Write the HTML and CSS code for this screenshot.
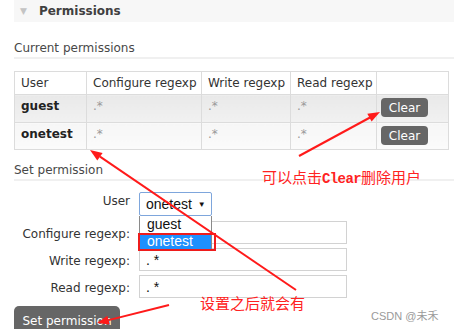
FILE: index.html
```html
<!DOCTYPE html>
<html lang="en">
<head>
    <meta charset="UTF-8">
    <meta name="viewport" content="width=device-width, initial-scale=1.0">
    <title>Permissions</title>
    <link rel="stylesheet" href="styles.css">
</head>
<body>
    <div class="page">
        <div class="section-head"><span class="tri">&#9660;</span>Permissions</div>

        <div class="section-body">
            <h3>Current permissions</h3>
            <table class="perms">
                <colgroup>
                    <col class="c-user">
                    <col class="c-conf">
                    <col class="c-write">
                    <col class="c-read">
                    <col class="c-act">
                </colgroup>
                <tr class="head-row">
                    <th>User</th>
                    <th>Configure regexp</th>
                    <th>Write regexp</th>
                    <th>Read regexp</th>
                    <th></th>
                </tr>
                <tr class="alt1">
                    <td class="name">guest</td>
                    <td class="rx">.*</td>
                    <td class="rx">.*</td>
                    <td class="rx">.*</td>
                    <td><button class="btn-clear">Clear</button></td>
                </tr>
                <tr class="alt2">
                    <td class="name">onetest</td>
                    <td class="rx">.*</td>
                    <td class="rx">.*</td>
                    <td class="rx">.*</td>
                    <td><button class="btn-clear">Clear</button></td>
                </tr>
            </table>

            <h3 class="set-title">Set permission</h3>
            <form class="set-form">
                <div class="row">
                    <label>User</label>
                    <div class="select">onetest <span class="caret">&#9660;</span></div>
                </div>
                <div class="row">
                    <label>Configure regexp:</label>
                    <input type="text" value="">
                </div>
                <div class="row">
                    <label>Write regexp:</label>
                    <input type="text" value=". *">
                </div>
                <div class="row">
                    <label>Read regexp:</label>
                    <input type="text" value=". *">
                </div>
            </form>
            <button class="btn-set">Set permission</button>
        </div>

        <!-- open select list -->
        <div class="dropdown">
            <div class="opt">guest</div>
            <div class="opt active">onetest</div>
        </div>
        <div class="mark-box"></div>

        <!-- annotations -->
        <svg class="arrows" width="454" height="329" viewBox="0 0 454 329">
            <g stroke="#ff1a1a" stroke-width="2" fill="none">
                <line x1="299" y1="156" x2="370" y2="117.5"/>
                <line x1="296" y1="290" x2="100" y2="156.7"/>
                <line x1="169" y1="305" x2="108.6" y2="320.1"/>
            </g>
            <g fill="#ff1a1a">
                <polygon points="380,112 371.6,121.6 367.3,113.8"/>
                <polygon points="90,150 102.6,153 97.3,160.4"/>
                <polygon points="97,323 109.8,324.5 107.4,315.7"/>
            </g>
        </svg>
        <div class="note note-clear">可以点击<span class="mono">Clear</span>删除用户</div>
        <div class="note note-set">设置之后就会有</div>
        <div class="watermark">CSDN @未禾</div>
    </div>
</body>
</html>
```

FILE: styles.css
```css
body {
    margin: 0;
    font-family: Verdana, "DejaVu Sans", sans-serif;
    font-size: 12px;
    color: #444;
    background: #fff;
}
.page {
    position: relative;
    width: 454px;
    height: 329px;
    overflow: hidden;
}
.section-head {
    margin-left: 14px;
    height: 22px;
    line-height: 22px;
    background: #f7f7f7;
    font-weight: bold;
    font-size: 12px;
    color: #404040;
}
.tri {
    display: inline-block;
    font-size: 9px;
    color: #c4c4c4;
    margin: 0 12px 0 6px;
    vertical-align: top;
}
.section-body {
    padding-left: 14px;
}
h3 {
    margin: 18px 0 0;
    font-size: 12px;
    font-weight: normal;
    line-height: 16px;
    padding-bottom: 1px;
    border-bottom: 2px solid #f0f0f0;
    color: #484848;
}
.perms {
    margin-top: 12px;
    border-collapse: collapse;
    table-layout: fixed;
    width: 434px;
    border: 1px solid #d6d6d6;
}
.c-user { width: 72px; }
.c-conf { width: 115px; }
.c-write { width: 89px; }
.c-read { width: 86px; }
.c-act { width: 72px; }
.perms th,
.perms td {
    border: 1px solid #dcdcdc;
    text-align: left;
    vertical-align: top;
    padding: 3px 6px;
    line-height: 16px;
    white-space: nowrap;
}
.head-row th {
    font-weight: normal;
    height: 16px;
    padding-top: 3px;
    color: #333;
}
.alt1 td {
    height: 21px;
    background: linear-gradient(#e9e9e9, #f1f1f1);
}
.alt2 td {
    height: 20px;
    background: linear-gradient(#f6f6f6, #fbfbfb);
}
.name {
    font-weight: bold;
    color: #222;
    padding-top: 2px;
}
.rx {
    color: #999;
}
.perms td:last-child {
    padding: 2px 4px;
}
.btn-clear {
    background: #666;
    color: #fff;
    border: none;
    border-radius: 4px;
    font-family: Verdana, "DejaVu Sans", sans-serif;
    font-size: 12px;
    width: 47px;
    height: 19px;
    padding: 0;
    margin-top: 1px;
}
.set-title {
    margin-top: 12px;
}
.set-form {
    margin-top: 11px;
}
.row {
    display: flex;
    align-items: center;
    height: 27px;
}
.row:first-child {
    height: 27px;
    align-items: flex-start;
}
.row label {
    width: 116px;
    text-align: right;
    margin-right: 9px;
    padding-top: 3px;
    color: #333;
}
.row:first-child label {
    padding-top: 2px;
}
.select {
    box-sizing: border-box;
    width: 73px;
    height: 24px;
    border: 1px solid #7ea6dc;
    border-radius: 2px;
    padding-left: 6px;
    font-family: "Liberation Sans", Arial, sans-serif;
    font-size: 14px;
    line-height: 22px;
    color: #111;
    background: #fff;
}
.caret {
    font-size: 8px;
    vertical-align: 2px;
    margin-left: 2px;
}
.row input {
    box-sizing: border-box;
    width: 208px;
    height: 23px;
    border: 1px solid #d2d2d2;
    padding: 0 6px;
    font-family: "Liberation Sans", Arial, sans-serif;
    font-size: 14px;
    color: #111;
}
.btn-set {
    margin-top: 6px;
    background: #666;
    color: #fff;
    border: none;
    border-radius: 5px;
    font-family: Verdana, "DejaVu Sans", sans-serif;
    font-size: 12px;
    width: 106px;
    height: 30px;
    padding: 0;
}
.dropdown {
    position: absolute;
    left: 139px;
    top: 216px;
    width: 73px;
    box-sizing: border-box;
    border: 1px solid #8a8a8a;
    border-top: none;
    background: #fff;
    font-family: "Liberation Sans", Arial, sans-serif;
    font-size: 14px;
}
.opt {
    height: 17px;
    line-height: 16px;
    padding-left: 7px;
    color: #111;
}
.opt.active {
    background: #1e90ff;
    color: #fff;
}
.mark-box {
    position: absolute;
    left: 138px;
    top: 233px;
    width: 74px;
    height: 14px;
    border: 2px solid #ee1c1c;
}
.arrows {
    position: absolute;
    left: 0;
    top: 0;
}
.note {
    position: absolute;
    font-family: "Noto Sans CJK SC", sans-serif;
    font-size: 15px;
    line-height: 18px;
    color: #ff2222;
    white-space: nowrap;
}
.mono {
    font-family: "Liberation Mono", monospace;
    font-size: 14px;
    font-weight: bold;
    letter-spacing: -0.6px;
}
.note-clear {
    left: 262px;
    top: 168px;
}
.note-set {
    left: 200px;
    top: 294px;
}
.watermark {
    position: absolute;
    left: 371px;
    top: 307px;
    font-family: "Liberation Sans", Arial, "Noto Sans CJK SC", sans-serif;
    font-size: 11px;
    color: #9a9a9a;
}
```
